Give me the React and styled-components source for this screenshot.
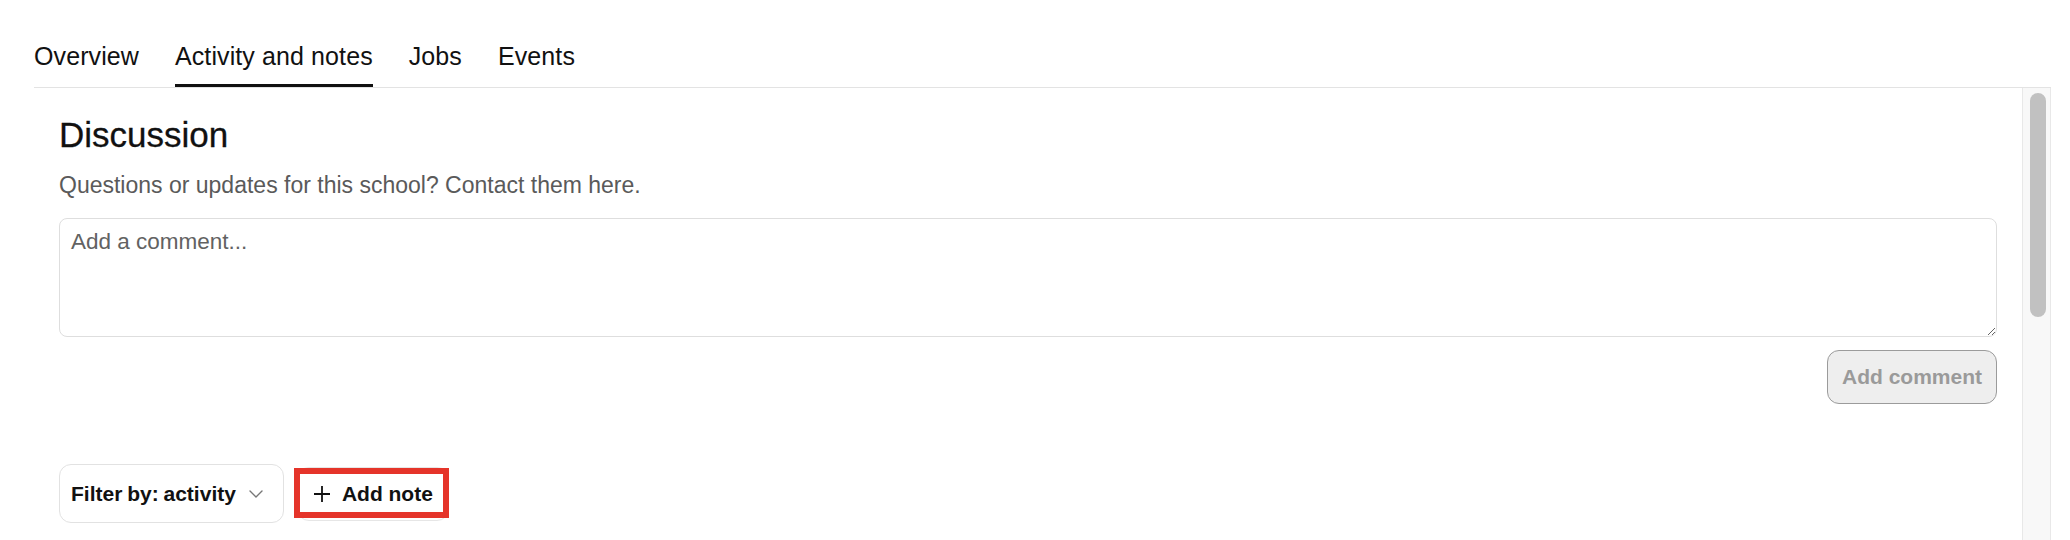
import React from "react";
import styled, { createGlobalStyle } from "styled-components";
import { ChevronDown } from "lucide-react";

const GlobalStyle = createGlobalStyle`
  html, body {
    margin: 0;
    padding: 0;
    background: #fff;
  }
  body {
    font-family: "Liberation Sans", Arial, Helvetica, sans-serif;
    color: #111;
    height: 540px;
    overflow: hidden;
  }
`;

const tabs = ["Overview", "Activity and notes", "Jobs", "Events"];

const PlusIcon = () => (
  <svg width="18" height="18" viewBox="0 0 18 18" fill="none">
    <path d="M9 1v16M1 9h16" stroke="#111" strokeWidth="1.8" />
  </svg>
);

const App = () => {
  return (
    <>
      <GlobalStyle />
      <Page>
        <TabBar>
          {tabs.map((t) => (
            <Tab key={t} $active={t === "Activity and notes"}>
              {t}
            </Tab>
          ))}
        </TabBar>
        <Panel>
          <Content>
            <Heading>Discussion</Heading>
            <Subtitle>Questions or updates for this school? Contact them here.</Subtitle>
            <CommentBox placeholder="Add a comment..." />
            <CommentActions>
              <SubmitButton disabled>Add comment</SubmitButton>
            </CommentActions>
            <Toolbar>
              <FilterButton>
                <span>Filter by: activity</span>
                <ChevronDown size={24} strokeWidth={1.4} color="#777" />
              </FilterButton>
              <AddNoteButton>
                <PlusIcon />
                Add note
                <Highlight />
              </AddNoteButton>
            </Toolbar>
          </Content>
          <ScrollTrack>
            <ScrollThumb />
          </ScrollTrack>
        </Panel>
      </Page>
    </>
  );
};

export default App;

const Page = styled.div`
  box-sizing: border-box;
  height: 540px;
  padding: 42px 19px 0 34px;
  display: flex;
  flex-direction: column;
`;

const TabBar = styled.nav`
  display: flex;
  gap: 36px;
`;

const Tab = styled.button`
  font-family: inherit;
  font-size: 25px;
  line-height: 29px;
  letter-spacing: 0.1px;
  color: #111;
  background: none;
  border: none;
  padding: 0 0 13px;
  border-bottom: 3px solid ${(p) => (p.$active ? "#111" : "transparent")};
  cursor: pointer;
`;

const Panel = styled.section`
  flex: 1;
  min-height: 0;
  display: flex;
  border-top: 1px solid #e3e3e3;
`;

const Content = styled.div`
  flex: 1;
  display: flex;
  flex-direction: column;
  padding: 27px 25px 0 25px;
`;

const Heading = styled.h2`
  margin: 0;
  font-size: 35px;
  line-height: 40px;
  font-weight: 400;
  color: #111;
  -webkit-text-stroke: 0.3px #111;
`;

const Subtitle = styled.p`
  margin: 17px 0 0;
  font-size: 23px;
  line-height: 26px;
  color: #5a5a5a;
`;

const CommentBox = styled.textarea`
  box-sizing: border-box;
  margin-top: 20px;
  width: 100%;
  height: 119px;
  padding: 10px 11px;
  border: 1px solid #dedede;
  border-radius: 8px;
  font-family: "Liberation Sans", Arial, sans-serif;
  font-size: 22.5px;
  line-height: 26px;
  color: #111;
  resize: vertical;
  outline: none;

  &::placeholder {
    color: #626262;
  }
`;

const CommentActions = styled.div`
  display: flex;
  justify-content: flex-end;
  margin-top: 13px;
`;

const SubmitButton = styled.button`
  height: 54px;
  padding: 0 14px;
  border: 1px solid #9b9b9b;
  border-radius: 12px;
  background: #eeeeee;
  color: #9a9a9a;
  font-family: inherit;
  font-size: 21px;
  font-weight: 700;
`;

const Toolbar = styled.div`
  display: flex;
  align-items: center;
  gap: 13px;
  margin-top: 60px;
`;

const FilterButton = styled.button`
  display: flex;
  align-items: center;
  gap: 8px;
  height: 59px;
  padding: 0 15px 0 11px;
  border: 1px solid #e2e2e2;
  border-radius: 12px;
  background: #fff;
  color: #111;
  font-family: inherit;
  font-size: 21px;
  font-weight: 700;
  word-spacing: -1px;
`;

const AddNoteButton = styled.button`
  position: relative;
  display: flex;
  align-items: center;
  gap: 11px;
  height: 54px;
  padding: 0 15px;
  border: 1px solid #e6e6e6;
  border-radius: 12px;
  background: #fff;
  color: #111;
  font-family: inherit;
  font-size: 21px;
  font-weight: 700;
`;

const Highlight = styled.span`
  position: absolute;
  top: 0;
  right: -1px;
  bottom: 2px;
  left: -4px;
  border: 6px solid #e5342a;
  pointer-events: none;
`;

const ScrollTrack = styled.div`
  box-sizing: border-box;
  width: 29px;
  padding: 5px 0 0 7px;
  background: #f8f8f8;
  border-left: 1px solid #e8e8e8;
  border-right: 1px solid #e8e8e8;
`;

const ScrollThumb = styled.div`
  width: 16px;
  height: 224px;
  border-radius: 8px;
  background: #c1c1c1;
`;
